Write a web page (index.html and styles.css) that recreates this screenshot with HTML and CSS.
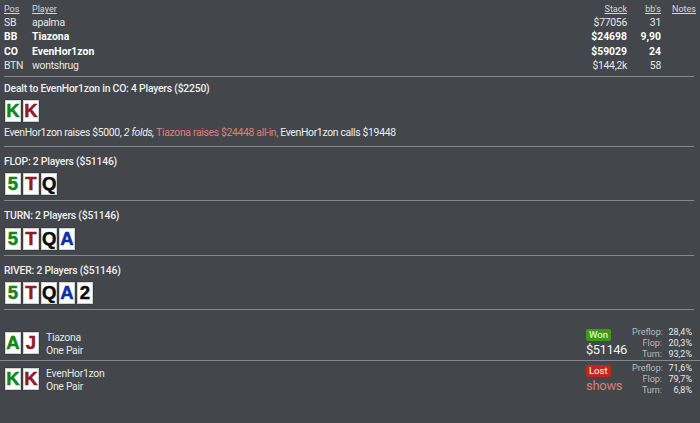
FILE: index.html
```html
<!DOCTYPE html>
<html lang="en">
<head>
<meta charset="utf-8">
<title>Hand history</title>
<link rel="stylesheet" href="styles.css">
</head>
<body>
<table class="players">
  <thead>
    <tr><th class="pos">Pos</th><th class="name">Player</th><th class="num">Stack</th><th class="bb">bb's</th><th class="notes">Notes</th></tr>
  </thead>
  <tbody>
    <tr><td>SB</td><td>apalma</td><td class="num">$77056</td><td class="bb">31</td><td></td></tr>
    <tr class="strong"><td>BB</td><td>Tiazona</td><td class="num">$24698</td><td class="bb">9,90</td><td></td></tr>
    <tr class="strong"><td>CO</td><td>EvenHor1zon</td><td class="num">$59029</td><td class="bb">24</td><td></td></tr>
    <tr><td>BTN</td><td>wontshrug</td><td class="num">$144,2k</td><td class="bb">58</td><td></td></tr>
  </tbody>
</table>
<hr>
<section class="street first">
  <h2>Dealt to EvenHor1zon in CO: 4 Players ($2250)</h2>
  <div class="cards"><span class="card green">K</span><span class="card red">K</span></div>
  <p class="actions">EvenHor1zon raises $5000, <em>2 folds,</em> <span class="hero">Tiazona raises $24448 all-in,</span> EvenHor1zon calls $19448</p>
</section>
<hr>
<section class="street">
  <h2>FLOP: 2 Players ($51146)</h2>
  <div class="cards"><span class="card green">5</span><span class="card red">T</span><span class="card black">Q</span></div>
</section>
<hr>
<section class="street">
  <h2>TURN: 2 Players ($51146)</h2>
  <div class="cards"><span class="card green">5</span><span class="card red">T</span><span class="card black">Q</span><span class="card blue">A</span></div>
</section>
<hr>
<section class="street">
  <h2>RIVER: 2 Players ($51146)</h2>
  <div class="cards"><span class="card green">5</span><span class="card red">T</span><span class="card black">Q</span><span class="card blue">A</span><span class="card black">2</span></div>
</section>
<hr>
<section class="results">
  <div class="result top">
    <div class="cards"><span class="card green">A</span><span class="card red">J</span></div>
    <div class="who"><div>Tiazona</div><div>One Pair</div></div>
    <div class="outcome"><span class="badge won">Won</span><div class="amount">$51146</div></div>
    <dl class="equity">
      <dt>Preflop:</dt><dd>28,4%</dd><dt>Flop:</dt><dd>20,3%</dd><dt>Turn:</dt><dd>93,2%</dd>
    </dl>
  </div>
  <div class="result">
    <div class="cards"><span class="card green">K</span><span class="card red">K</span></div>
    <div class="who"><div>EvenHor1zon</div><div>One Pair</div></div>
    <div class="outcome"><span class="badge lost">Lost</span><div class="amount shows">shows</div></div>
    <dl class="equity">
      <dt>Preflop:</dt><dd>71,6%</dd><dt>Flop:</dt><dd>79,7%</dd><dt>Turn:</dt><dd>6,8%</dd>
    </dl>
  </div>
</section>
</body>
</html>
```
FILE: styles.css
```css
* { box-sizing: border-box; }
html, body { margin: 0; height: 100%; }
body {
  background: #43464a;
  color: #e6e6e6;
  font-family: Roboto, "Open Sans", sans-serif;
  font-size: 10.4px;
  line-height: 14.5px;
  letter-spacing: -0.27px;
  padding: 3px 0 0;
  overflow: hidden;
}
.players { width: 700px; border-collapse: collapse; table-layout: fixed; margin-bottom: 2.5px; }
.players th, .players td { padding: 0; font-weight: 400; text-align: left; height: 14.5px; }
.players th { font-size: 9px; letter-spacing: 0; line-height: 12.5px; height: 12.5px; text-decoration: underline; color: #d8d8d8; }
.pos { width: 32px; padding-left: 4px !important; }
.players td:first-child { padding-left: 4px; }
.players .num { width: 595px; text-align: right; }
.players .bb { width: 34px; text-align: right; }
.players .notes { width: 39px; text-align: left; padding-left: 11px; }
.players .strong td { font-weight: 700; letter-spacing: 0; color: #fff; }
hr { border: 0; height: 1px; margin: 0 0 0 4px; background: #85878a; width: 690px; }
.street { padding: 8px 4px 4.5px; }
.street.first { padding: 4.5px 4px 5.5px; }
.street h2 { margin: 0; font-size: 10.4px; letter-spacing: -0.22px; line-height: 14px; font-weight: 500; color: #eee; }
.cards { display: flex; gap: 2px; padding-left: 1px; }
.street .cards { margin-top: 4.5px; padding-bottom: 0.5px; }
.card {
  width: 16px; height: 22px;
  background: #fff;
  border: 1px solid #d2d2d2;
  box-shadow: 0 0 1px #1c1c1c;
  font-family: "Liberation Sans", sans-serif;
  font-weight: 700;
  font-size: 18.5px;
  letter-spacing: 0;
  line-height: 20px;
  text-align: center;
  -webkit-text-stroke: 0.5px currentColor;
  overflow: hidden;
}
.green { color: #158515; }
.red { color: #931a24; }
.black { color: #0a0a0a; }
.blue { color: #0c2fa8; }
.actions { margin: 3px 0 0; letter-spacing: -0.32px; color: #eee; }
.hero { color: #e08074; }
.results { padding-top: 15px; }
.result { display: flex; align-items: flex-start; padding: 0 8px 0 4px; height: 36px; }
.result.top { height: 36px; border-bottom: 1px solid #85878a; }
.result > .cards { margin-top: 7px; }
.who { margin-left: 7px; flex: 1; margin-top: 6px; line-height: 13px; }
.outcome { width: 46px; margin-top: 4px; line-height: 1; }
.badge { display: block; width: fit-content; font-size: 9.5px; letter-spacing: 0; line-height: 12px; padding: 0 3px; border-radius: 2px; color: #fff; }
.won { background: #3f9a0d; }
.lost { background: #c0281f; }
.amount { font-size: 13px; letter-spacing: -0.5px; line-height: 16px; margin-top: 1px; color: #f2f2f2; }
.amount.shows { font-size: 13px; letter-spacing: -0.3px; color: #dc7d73; }
.equity { margin: 2px 0 0; width: 60px; display: grid; grid-template-columns: 30px 30px; font-size: 9px; letter-spacing: 0; line-height: 11px; }
.equity dt { text-align: right; color: #b9bbbd; }
.equity dd { margin: 0; text-align: right; color: #e6e6e6; }
```
